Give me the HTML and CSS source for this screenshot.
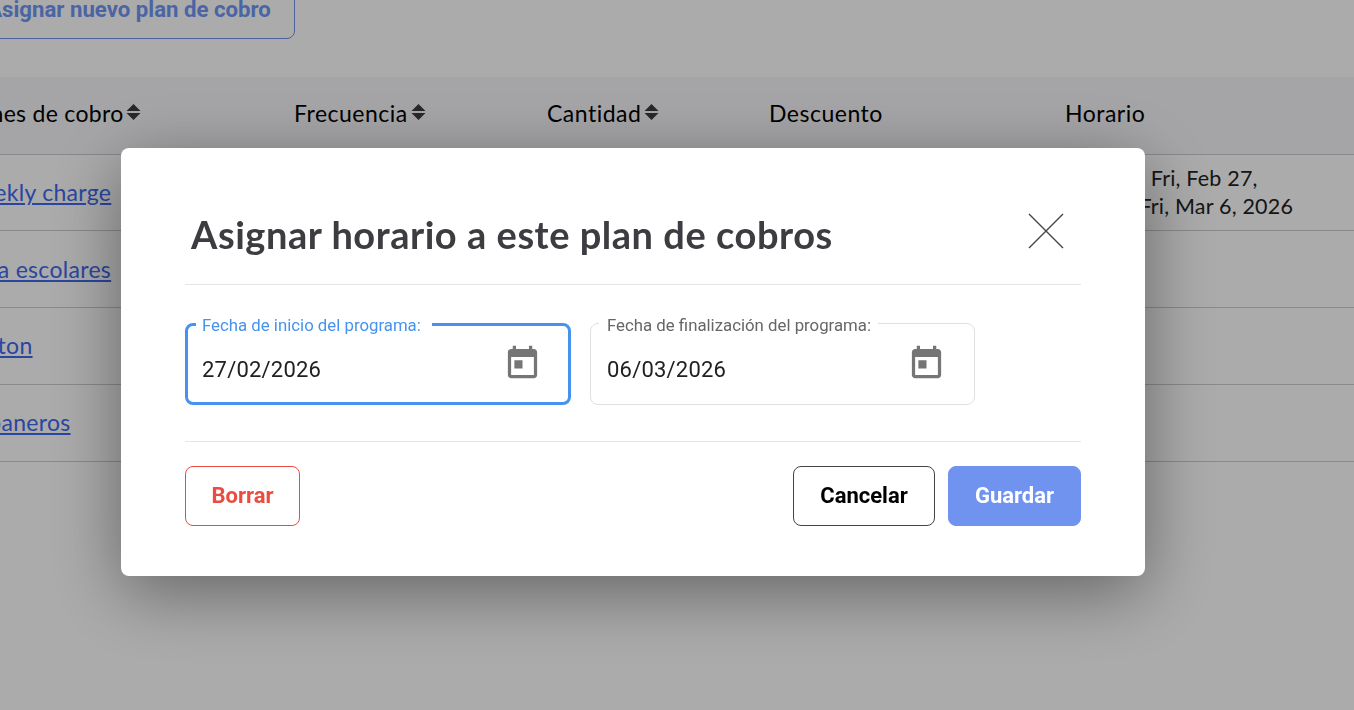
FILE: index.html
```html
<!DOCTYPE html>
<html>

<head>
    <meta charset="utf-8" />
    <title>Planes de cobro</title>
    <link rel="stylesheet" href="styles.css">
</head>

<body>
    <!-- pagina de fondo, desplazada como en la captura -->
    <div class="page">
        <button class="assign_btn">Asignar nuevo plan de cobro</button>
        <table class="plans">
            <colgroup>
                <col class="col_name">
                <col class="col_freq">
                <col class="col_amount">
                <col class="col_discount">
                <col>
            </colgroup>
            <thead>
                <tr>
                    <th><span class="sort">Planes de cobro<svg viewBox="0 0 15 16"><path d="M7.500 0l7 7H.5zM.5 9h14l-7 7z" /></svg></span></th>
                    <th><span class="sort">Frecuencia<svg viewBox="0 0 15 16"><path d="M7.500 0l7 7H.5zM.5 9h14l-7 7z" /></svg></span></th>
                    <th><span class="sort">Cantidad<svg viewBox="0 0 15 16"><path d="M7.500 0l7 7H.5zM.5 9h14l-7 7z" /></svg></span></th>
                    <th>Descuento</th>
                    <th>Horario</th>
                </tr>
            </thead>
            <tbody>
                <tr>
                    <td><a href="#">Weekly charge</a></td>
                    <td></td>
                    <td></td>
                    <td></td>
                    <td class="schedule">Primera: Fri, Feb 27,<br>Última: Fri, Mar 6, 2026</td>
                </tr>
                <tr>
                    <td><a href="#">Beca escolares</a></td>
                    <td></td>
                    <td></td>
                    <td></td>
                    <td></td>
                </tr>
                <tr>
                    <td><a href="#">Boston</a></td>
                    <td></td>
                    <td></td>
                    <td></td>
                    <td></td>
                </tr>
                <tr>
                    <td><a href="#">Habaneros</a></td>
                    <td></td>
                    <td></td>
                    <td></td>
                    <td></td>
                </tr>
            </tbody>
        </table>
    </div>

    <div class="overlay">
        <div class="modal">
            <div class="modal_head">
                <h2>Asignar horario a este plan de cobros</h2>
                <button class="close_btn" aria-label="Cerrar">
                    <svg viewBox="0 0 36 36"><path d="M1 1l34 34M35 1L1 35" /></svg>
                </button>
            </div>
            <div class="modal_body">
                <fieldset class="date_field focused">
                    <legend>Fecha de inicio del programa:</legend>
                    <span class="date_value">27/02/2026</span>
                    <svg class="cal_icon" viewBox="0 0 24 24"><path d="M19 3h-1V1h-2v2H8V1H6v2H5c-1.110 0-1.990.9-1.990 2L3 19c0 1.100.89 2 2 2h14c1.100 0 2-.9 2-2V5c0-1.100-.9-2-2-2zm0 16H5V8h14v11zM7 10h5v5H7z" /></svg>
                </fieldset>
                <fieldset class="date_field">
                    <legend>Fecha de finalización del programa:</legend>
                    <span class="date_value">06/03/2026</span>
                    <svg class="cal_icon" viewBox="0 0 24 24"><path d="M19 3h-1V1h-2v2H8V1H6v2H5c-1.110 0-1.990.9-1.990 2L3 19c0 1.100.89 2 2 2h14c1.100 0 2-.9 2-2V5c0-1.100-.9-2-2-2zm0 16H5V8h14v11zM7 10h5v5H7z" /></svg>
                </fieldset>
            </div>
            <div class="modal_foot">
                <button class="btn btn_delete">Borrar</button>
                <button class="btn btn_cancel">Cancelar</button>
                <button class="btn btn_save">Guardar</button>
            </div>
        </div>
    </div>
</body>

</html>
```

FILE: styles.css
```css
* {
    margin: 0;
    padding: 0;
    box-sizing: border-box;
}

body {
    width: 1354px;
    height: 710px;
    overflow: hidden;
    background: #fff;
    font-family: "Lato", "Liberation Sans", sans-serif;
}

button {
    font-family: "Roboto", "Liberation Sans", sans-serif;
    cursor: pointer;
}

.page {
    width: 1391px;
    margin: -21px 0 0 -37px;
}

.assign_btn {
    display: block;
    width: 332px;
    height: 60px;
    background: #fff;
    border: 1px solid #6f93ef;
    border-radius: 8px;
    color: #7096f5;
    font-size: 22.200px;
    font-weight: 700;
}

.plans {
    width: 1395px;
    margin: 38px 0 0 -4px;
    table-layout: fixed;
    border-collapse: collapse;
    font-size: 23px;
    letter-spacing: 0.5px;
}

.col_name {
    width: 335px;
}

.col_freq {
    width: 253px;
}

.col_amount {
    width: 222px;
}

.col_discount {
    width: 296px;
}

.plans th {
    height: 77px;
    padding: 0 0 4px;
    background: #f7f7fa;
    border-bottom: 1px solid #ccc;
    color: #000;
    font-weight: 400;
    text-align: left;
}

.plans td {
    height: 76.750px;
    padding-bottom: 1px;
    border-bottom: 1px solid #ccc;
    color: #222;
    line-height: 28px;
    vertical-align: middle;
}

.plans th:first-child,
.plans td:first-child {
    letter-spacing: 0.3px;
}

.plans .schedule {
    font-size: 21.500px;
    letter-spacing: 0.2px;
}

.plans a {
    color: #4069ee;
}

.sort {
    display: inline-flex;
    align-items: center;
}

.sort svg {
    width: 15px;
    height: 16px;
    margin: -2px 0 0 3px;
    fill: #3c3c41;
}

.overlay {
    position: fixed;
    top: 0;
    left: 0;
    width: 1354px;
    height: 710px;
    padding: 148px 0 0 121px;
    background: rgba(0, 0, 0, 0.33);
}

.modal {
    width: 1024px;
    height: 428px;
    padding: 0 64px;
    background: #fff;
    border-radius: 8px;
    box-shadow: 0 16px 70px rgba(0, 0, 0, 0.42);
}

.modal_head {
    display: flex;
    align-items: center;
    justify-content: space-between;
    height: 137px;
    padding: 36px 17px 0 6px;
    border-bottom: 1px solid #e5e5e5;
}

.modal_head h2 {
    color: #3c3c41;
    font-size: 38px;
    font-weight: 700;
    letter-spacing: 0.53px;
}

.close_btn {
    width: 36px;
    height: 36px;
    margin-top: -7px;
    background: none;
    border: 0;
}

.close_btn svg {
    display: block;
    fill: none;
    stroke: #444;
    stroke-width: 1.4;
}

.modal_body {
    display: flex;
    gap: 19px;
    height: 157px;
    padding-top: 27px;
    border-bottom: 1px solid #e5e5e5;
}

.date_field {
    display: flex;
    align-items: center;
    justify-content: space-between;
    width: 385px;
    height: 93px;
    padding: 0 28px 0 16px;
    border: 1px solid #e0e0e0;
    border-radius: 8px;
    font-family: "Roboto", "Liberation Sans", sans-serif;
}

.date_field legend {
    margin-left: -8px;
    padding: 4px 7px 1px 8px;
    color: #666;
    font-size: 16.800px;
    line-height: 18px;
}

.date_field.focused {
    width: 386px;
    padding: 0 26px 0 14px;
    border: 3px solid #4593ee;
}

.date_field.focused legend {
    margin-left: -6px;
    padding: 4px 11px 3px 6px;
    color: #4593ee;
}

.date_value {
    color: #212121;
    font-size: 22px;
    letter-spacing: 0.2px;
}

.cal_icon {
    width: 39px;
    height: 39px;
    margin-top: -13px;
    fill: #757575;
}

.modal_foot {
    display: flex;
    justify-content: flex-end;
    gap: 13px;
    padding-top: 24px;
}

.btn {
    height: 60px;
    padding-bottom: 2px;
    background: #fff;
    border: 1px solid #444;
    border-radius: 8px;
    color: #000;
    font-size: 22px;
    font-weight: 700;
}

.btn_delete {
    width: 115px;
    margin-right: auto;
    border-color: #eb4c42;
    color: #eb4c42;
}

.btn_cancel {
    width: 142px;
}

.btn_save {
    width: 133px;
    background: #6f93ef;
    border-color: #6f93ef;
    color: #fff;
}
```
